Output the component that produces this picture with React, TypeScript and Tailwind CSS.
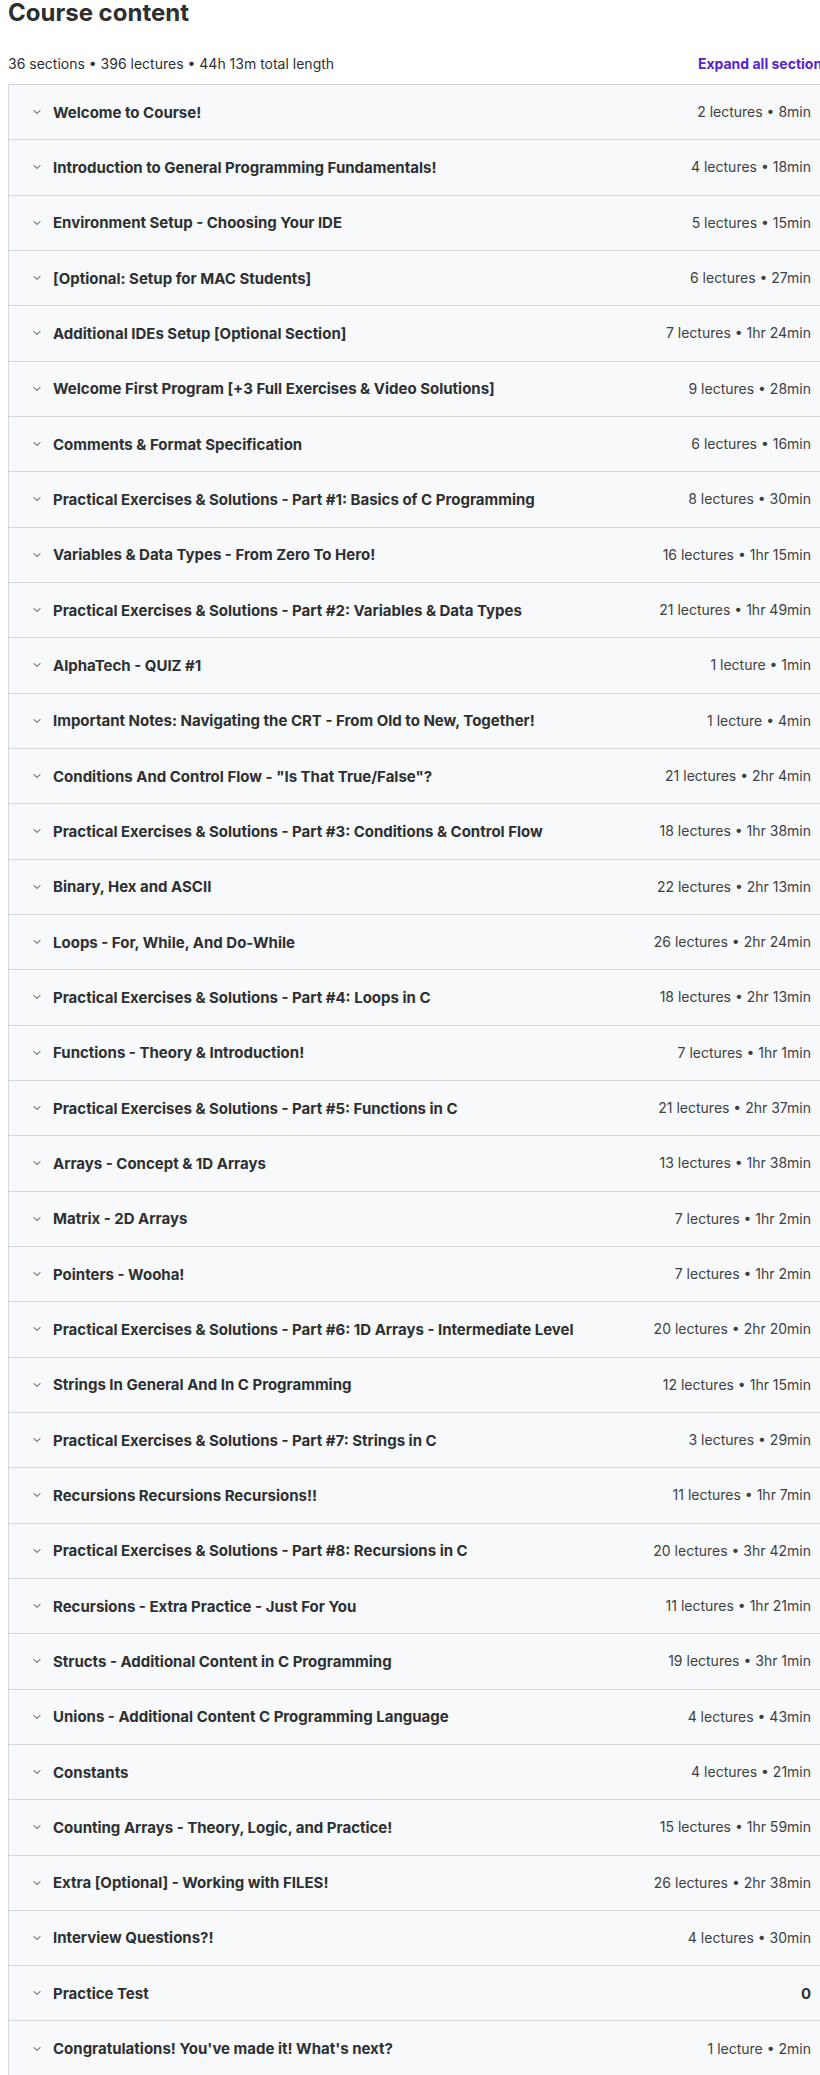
import { ChevronDown } from 'lucide-react'

type Section = { title: string; meta: string; bold?: boolean }

const sections: Section[] = [
  { title: 'Welcome to Course!', meta: '2 lectures • 8min' },
  { title: 'Introduction to General Programming Fundamentals!', meta: '4 lectures • 18min' },
  { title: 'Environment Setup - Choosing Your IDE', meta: '5 lectures • 15min' },
  { title: '[Optional: Setup for MAC Students]', meta: '6 lectures • 27min' },
  { title: 'Additional IDEs Setup [Optional Section]', meta: '7 lectures • 1hr 24min' },
  { title: 'Welcome First Program [+3 Full Exercises & Video Solutions]', meta: '9 lectures • 28min' },
  { title: 'Comments & Format Specification', meta: '6 lectures • 16min' },
  { title: 'Practical Exercises & Solutions - Part #1: Basics of C Programming', meta: '8 lectures • 30min' },
  { title: 'Variables & Data Types - From Zero To Hero!', meta: '16 lectures • 1hr 15min' },
  { title: 'Practical Exercises & Solutions - Part #2: Variables & Data Types', meta: '21 lectures • 1hr 49min' },
  { title: 'AlphaTech - QUIZ #1', meta: '1 lecture • 1min' },
  { title: 'Important Notes: Navigating the CRT - From Old to New, Together!', meta: '1 lecture • 4min' },
  { title: 'Conditions And Control Flow - "Is That True/False"?', meta: '21 lectures • 2hr 4min' },
  { title: 'Practical Exercises & Solutions - Part #3: Conditions & Control Flow', meta: '18 lectures • 1hr 38min' },
  { title: 'Binary, Hex and ASCII', meta: '22 lectures • 2hr 13min' },
  { title: 'Loops - For, While, And Do-While', meta: '26 lectures • 2hr 24min' },
  { title: 'Practical Exercises & Solutions - Part #4: Loops in C', meta: '18 lectures • 2hr 13min' },
  { title: 'Functions - Theory & Introduction!', meta: '7 lectures • 1hr 1min' },
  { title: 'Practical Exercises & Solutions - Part #5: Functions in C', meta: '21 lectures • 2hr 37min' },
  { title: 'Arrays - Concept & 1D Arrays', meta: '13 lectures • 1hr 38min' },
  { title: 'Matrix - 2D Arrays', meta: '7 lectures • 1hr 2min' },
  { title: 'Pointers - Wooha!', meta: '7 lectures • 1hr 2min' },
  { title: 'Practical Exercises & Solutions - Part #6: 1D Arrays - Intermediate Level', meta: '20 lectures • 2hr 20min' },
  { title: 'Strings In General And In C Programming', meta: '12 lectures • 1hr 15min' },
  { title: 'Practical Exercises & Solutions - Part #7: Strings in C', meta: '3 lectures • 29min' },
  { title: 'Recursions Recursions Recursions!!', meta: '11 lectures • 1hr 7min' },
  { title: 'Practical Exercises & Solutions - Part #8: Recursions in C', meta: '20 lectures • 3hr 42min' },
  { title: 'Recursions - Extra Practice - Just For You', meta: '11 lectures • 1hr 21min' },
  { title: 'Structs - Additional Content in C Programming', meta: '19 lectures • 3hr 1min' },
  { title: 'Unions - Additional Content C Programming Language', meta: '4 lectures • 43min' },
  { title: 'Constants', meta: '4 lectures • 21min' },
  { title: 'Counting Arrays - Theory, Logic, and Practice!', meta: '15 lectures • 1hr 59min' },
  { title: 'Extra [Optional] - Working with FILES!', meta: '26 lectures • 2hr 38min' },
  { title: 'Interview Questions?!', meta: '4 lectures • 30min' },
  { title: 'Practice Test', meta: '0', bold: true },
  { title: "Congratulations! You've made it! What's next?", meta: '1 lecture • 2min' },
]

function SectionRow({ section }: { section: Section }) {
  return (
    <div className="flex items-center justify-between h-[55.33px] bg-[#f7f9fa] border-b border-[#d1d7dc] pl-[22px] pr-[18px] leading-[1.4]">
      <div className="flex items-center gap-[10px]">
        <ChevronDown className="w-3 h-3 text-[#2d2f31]" strokeWidth={2} />
        <span className="text-[15px] font-bold text-[#2d2f31]">{section.title}</span>
      </div>
      <span className={section.bold ? 'text-[15px] font-bold text-[#2d2f31]' : 'text-sm text-[#3e4143]'}>
        {section.meta}
      </span>
    </div>
  )
}

export default function App() {
  return (
    <div className="w-[820px] overflow-hidden bg-white text-[#2d2f31]" style={{ fontFamily: 'Inter, "Noto Sans", sans-serif' }}>
      <div className="w-[822px] ml-[8px]">
        <h2 className="text-2xl font-bold leading-[26px]">Course content</h2>
        <div className="flex items-center justify-between mt-[28px] mb-[10px] text-sm">
          <span>36 sections • 396 lectures • 44h 13m total length</span>
          <button className="font-bold text-[#5624d0]">Expand all sections</button>
        </div>
        <div className="border-t border-l border-r border-[#d1d7dc]">
          {sections.map(s => (
            <SectionRow key={s.title} section={s} />
          ))}
        </div>
      </div>
    </div>
  )
}
